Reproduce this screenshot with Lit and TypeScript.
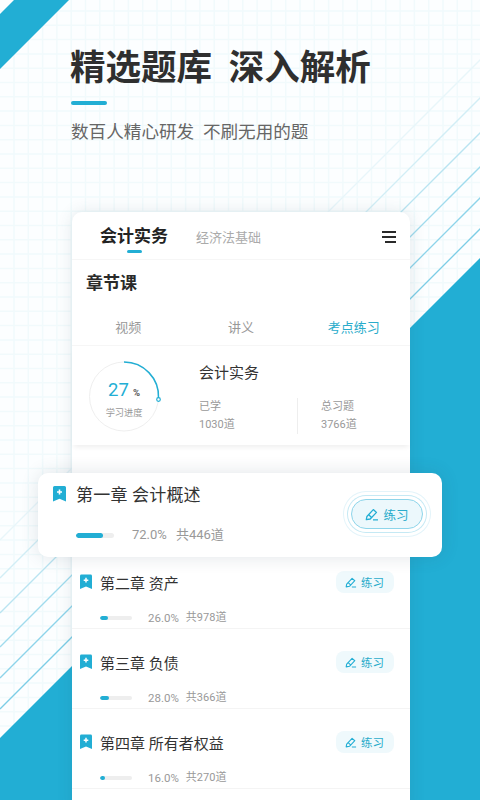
import { LitElement, html, css, svg } from "lit";
import { customElement } from "lit/decorators.js";

const LINES: [number, string][] = [
  [540, "#e8f6fa"],
  [578, "#d2eef6"],
  [613, "#b9e4f1"],
  [647, "#a0dbed"],
  [678, "#8dd4ea"],
  [709, "#7ccde6"],
];

const ROWS = [
  { title: "第二章 资产", pct: 26, total: 978 },
  { title: "第三章 负债", pct: 28, total: 366 },
  { title: "第四章 所有者权益", pct: 16, total: 270 },
];

const gridLines = () => {
  const out = [];
  for (let x = 14; x < 480; x += 14.3) out.push(svg`<line x1=${x} y1="0" x2=${x} y2="800" />`);
  for (let y = 11; y < 800; y += 14.3) out.push(svg`<line x1="0" y1=${y} x2="480" y2=${y} />`);
  return out;
};

const bookmark = () => html`<svg class="bookmark" viewBox="0 0 13 16">
  <path fill="#22aed4" d="M1.500 0h10A1.500 1.500 0 0 1 13 1.500V15.500L6.500 12.800 0 15.500V1.500A1.500 1.500 0 0 1 1.500 0z" />
  <path stroke="#fff" stroke-width="1.600" d="M6.500 3.500v5M4 6h5" />
</svg>`;

const pen = () => html`<svg class="pen" viewBox="0 0 14 13" fill="none" stroke="#22aed4" stroke-width="1.300">
  <path stroke-linejoin="round" d="M1.300 11.700l.6-3.200L8.300 1.600l3.200 2.800-6.300 6.600z" />
  <path d="M3.700 6.700l3.100 3M8 11.800h5" />
</svg>`;

@customElement("app-root")
export class AppRoot extends LitElement {
  static styles = css`
    :host {
      display: block;
      position: relative;
      width: 480px;
      height: 800px;
      overflow: hidden;
      background: #fcfeff;
      font-family: Roboto, "Noto Sans CJK SC", sans-serif;
      color: #333;
    }
    .bg {
      position: absolute;
      inset: 0;
      width: 480px;
      height: 800px;
    }
    .grid line {
      stroke: #f1fafc;
      stroke-width: 1.500;
    }
    .content {
      position: relative;
      padding-top: 43px;
    }
    .hero {
      padding-left: 70px;
    }
    h1 {
      margin: 0;
      font-size: 35.500px;
      line-height: 50px;
      font-weight: 700;
      color: #2f2f2f;
      white-space: pre;
      word-spacing: -0.500px;
    }
    .rule {
      width: 36px;
      height: 4px;
      margin: 8px 0 0 1px;
      border-radius: 2px;
      background: #22aed4;
    }
    .sub {
      margin: 14px 0 0 1px;
      font-size: 17.600px;
      line-height: 26px;
      color: #666;
      white-space: pre;
    }
    .card {
      width: 338px;
      height: 600px;
      margin: 67px 0 0 72px;
      border-radius: 10px 10px 0 0;
      background: #fff;
      box-shadow: 0 0 16px rgba(40, 70, 90, 0.12);
    }
    .tabs {
      display: flex;
      height: 35px;
      padding: 12px 14px 0 28px;
      border-bottom: 1px solid #f6f6f6;
    }
    .tab-on {
      display: flex;
      flex-direction: column;
      align-items: center;
      font-size: 17px;
      line-height: 24px;
      font-weight: 700;
      color: #222;
    }
    .tab-on i {
      width: 15px;
      height: 3px;
      margin-top: 2px;
      border-radius: 2px;
      background: #22aed4;
    }
    .tab-off {
      margin: 2px 0 0 28px;
      font-size: 13px;
      line-height: 24px;
      color: #aaa;
    }
    .menu {
      width: 14px;
      height: 12px;
      margin: 7px 0 0 auto;
    }
    h2 {
      margin: 0;
      padding: 11px 0 0 14px;
      font-size: 17px;
      line-height: 24px;
      font-weight: 700;
      color: #2a2a2a;
    }
    .modes {
      display: grid;
      grid-template-columns: repeat(3, 1fr);
      margin-top: 12px;
      height: 38px;
      align-items: center;
      justify-items: center;
      text-align: center;
      font-size: 13px;
      color: #999;
      border-bottom: 1px solid #f6f6f6;
    }
    .modes .on {
      color: #2aaccb;
    }
    .stats {
      display: flex;
      height: 99px;
      padding-left: 16px;
      box-shadow: 0 4px 5px -2px rgba(0, 0, 0, 0.07);
    }
    .ring {
      position: relative;
      flex: none;
      width: 72px;
      height: 72px;
      margin-top: 14px;
    }
    .ring svg {
      display: block;
      overflow: visible;
    }
    .ring-text {
      position: absolute;
      inset: 0;
      display: flex;
      flex-direction: column;
      align-items: center;
    }
    .num {
      margin-top: 19px;
      font-size: 18.500px;
      line-height: 22px;
      color: #22aed4;
      white-space: nowrap;
    }
    .num b {
      font-size: 9.500px;
      color: #555;
      margin-left: 4px;
    }
    .lbl {
      margin-top: 3px;
      font-size: 9.200px;
      line-height: 12px;
      color: #999;
    }
    .info {
      margin-left: 39px;
      flex: 1;
    }
    .info-t {
      margin-top: 16px;
      font-size: 15px;
      line-height: 22px;
      color: #333;
    }
    .nums {
      display: flex;
      margin-top: 14px;
      font-size: 11px;
      line-height: 18px;
      color: #999;
    }
    .nums > div {
      width: 98px;
    }
    .nums > div + div {
      width: auto;
      padding-left: 23px;
      border-left: 1px solid #eee;
    }
    .hi {
      display: flex;
      justify-content: space-between;
      align-items: flex-start;
      box-sizing: border-box;
      width: 404px;
      height: 84px;
      margin: 28px 0 0 -34px;
      padding: 9px 19px 0 15px;
      position: relative;
      border-radius: 10px;
      background: #fff;
      box-shadow: 0 0 18px rgba(40, 70, 90, 0.14);
    }
    .hi .head {
      display: flex;
      align-items: center;
      gap: 10px;
      height: 22px;
      font-size: 17px;
      letter-spacing: 0.2px;
      color: #333;
    }
    .hi .bookmark {
      width: 13px;
      height: 16px;
      margin-top: 2px;
    }
    .hi .meta {
      margin: 23px 0 0 23px;
      font-size: 13px;
      line-height: 16px;
    }
    .hi .meta .track {
      width: 38px;
      height: 5px;
      margin-right: 18px;
    }
    .hi .meta .pct {
      margin-right: 9px;
    }
    .meta {
      display: flex;
      align-items: center;
      color: #999;
      white-space: nowrap;
    }
    .track {
      height: 4px;
      width: 32px;
      margin-right: 16px;
      background: #eee;
      border-radius: 3px;
      overflow: hidden;
    }
    .fill {
      height: 100%;
      background: #22aed4;
      border-radius: 3px;
    }
    .pct {
      margin-right: 7px;
    }
    .big-btn {
      display: flex;
      align-items: center;
      justify-content: center;
      gap: 4px;
      box-sizing: border-box;
      width: 72px;
      height: 30px;
      margin-top: 17px;
      border: 1px solid #8ed5ea;
      border-radius: 15px;
      background: #ecf8fc;
      color: #2aaccb;
      font-size: 12.500px;
      box-shadow:
        0 0 0 3px #fff,
        0 0 0 4px #c5e9f4,
        0 0 0 7px #fff,
        0 0 0 8px #e3f4fa;
    }
    .big-btn .pen {
      width: 14px;
      height: 13px;
    }
    .row {
      box-sizing: border-box;
      height: 80px;
      padding: 22px 16px 0 8px;
      border-bottom: 1px solid #f4f4f4;
    }
    .row.first {
      height: 72px;
      padding-top: 14px;
    }
    .row .head {
      display: flex;
      align-items: center;
      height: 22px;
      font-size: 15px;
      color: #333;
    }
    .row .bookmark {
      width: 12px;
      height: 16px;
      margin-right: 8px;
    }
    .pill {
      display: flex;
      align-items: center;
      gap: 4px;
      margin-left: auto;
      padding: 0 10px 0 9px;
      height: 22px;
      border-radius: 8px;
      background: #eff9fc;
      color: #2aaccb;
      font-size: 11.500px;
    }
    .pill .pen {
      width: 12px;
      height: 11px;
    }
    .row .meta {
      margin: 18px 0 0 20px;
      font-size: 11.500px;
      line-height: 14px;
    }
    .row .meta .total {
      font-size: 11px;
    }
  `;

  render() {
    return html`
      <svg class="bg" viewBox="0 0 480 800">
        <g class="grid">${gridLines()}</g>
        ${LINES.map(([s, c]) => svg`<line x1="0" y1=${s} x2=${s} y2="0" stroke=${c} stroke-width="1.300" />`)}
        <polygon fill="#22aed4" points="14,0 69,0 0,69 0,14" />
        <polygon fill="#22aed4" points="480,258 0,738 0,800 480,800" />
      </svg>
      <div class="content">
        <div class="hero">
          <h1>精选题库  深入解析</h1>
          <div class="rule"></div>
          <p class="sub">数百人精心研发  不刷无用的题</p>
        </div>
        <div class="card">
          <div class="tabs">
            <div class="tab-on">会计实务<i></i></div>
            <div class="tab-off">经济法基础</div>
            <svg class="menu" viewBox="0 0 14 12" stroke="#2a2a2a" stroke-width="1.800">
              <path d="M0 1h14M0 6h14M3 11h11" />
            </svg>
          </div>
          <h2>章节课</h2>
          <div class="modes">
            <span>视频</span><span>讲义</span><span class="on">考点练习</span>
          </div>
          <div class="stats">
            <div class="ring">
              <svg width="72" height="72" viewBox="0 0 72 72" fill="none">
                <circle cx="36" cy="36.500" r="34.500" stroke="#efefef" stroke-width="1" />
                <path d="M36 2A34.500 34.500 0 0 1 70.500 38" stroke="#22aed4" stroke-width="1.500" />
                <circle cx="70.500" cy="39.500" r="1.800" fill="#fff" stroke="#22aed4" stroke-width="1.200" />
              </svg>
              <div class="ring-text">
                <div class="num">27<b>%</b></div>
                <div class="lbl">学习进度</div>
              </div>
            </div>
            <div class="info">
              <div class="info-t">会计实务</div>
              <div class="nums">
                <div>已学<br />1030道</div>
                <div>总习题<br />3766道</div>
              </div>
            </div>
          </div>
          <div class="hi">
            <div>
              <div class="head">${bookmark()}<span>第一章 会计概述</span></div>
              <div class="meta">
                <div class="track"><div class="fill" style="width:72%"></div></div>
                <span class="pct">72.0%</span><span>共446道</span>
              </div>
            </div>
            <div class="big-btn">${pen()}<span>练习</span></div>
          </div>
          ${ROWS.map(
            (r, i) => html`<div class="row ${i === 0 ? "first" : ""}">
              <div class="head">
                ${bookmark()}<span>${r.title}</span>
                <div class="pill">${pen()}<span>练习</span></div>
              </div>
              <div class="meta">
                <div class="track"><div class="fill" style="width:${r.pct}%"></div></div>
                <span class="pct">${r.pct}.0%</span><span class="total">共${r.total}道</span>
              </div>
            </div>`
          )}
        </div>
      </div>
    `;
  }
}
